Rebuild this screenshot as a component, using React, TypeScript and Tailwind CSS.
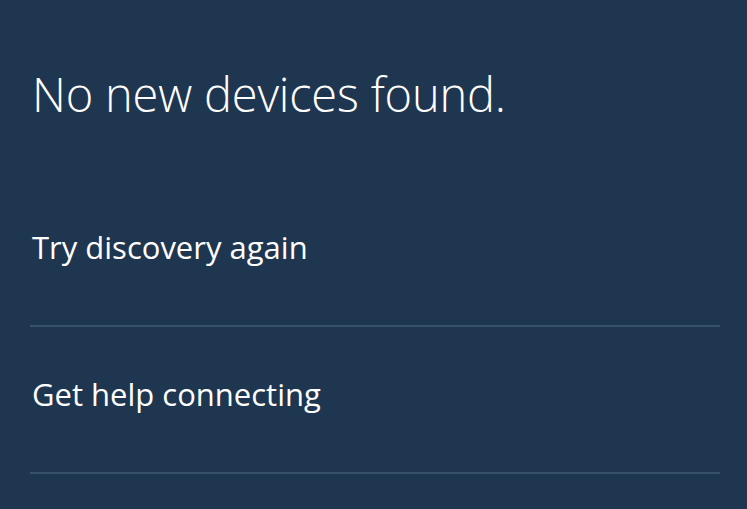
export default function App() {
  return (
    <div
      className="w-[747px] h-[509px] overflow-hidden bg-[#1f3651] text-white"
      style={{ fontFamily: '"Open Sans", "Noto Sans", sans-serif' }}
    >
      <div className="pl-[30px] pr-[27px]">
        <h1 className="pt-[66px] pl-[2px] text-[47px] leading-[56px] font-light tracking-[-0.2px]">
          No new devices found.
        </h1>
        <div className="mt-[58px]">
          <div className="h-[145px] flex items-center pl-[2px] text-[31px] leading-[38px] pb-[12px]">
            Try discovery again
          </div>
          <div className="h-[2px] bg-[#37506b]" />
          <div className="h-[145px] flex items-center pl-[2px] text-[31px] leading-[38px] pb-[12px]">
            Get help connecting
          </div>
          <div className="h-[2px] bg-[#37506b]" />
        </div>
      </div>
    </div>
  );
}
